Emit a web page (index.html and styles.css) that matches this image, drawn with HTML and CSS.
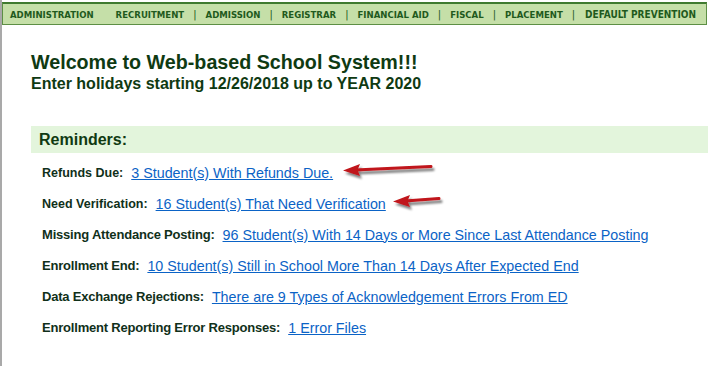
FILE: index.html
```html
<!DOCTYPE html>
<html lang="en">
<head>
  <meta charset="UTF-8">
  <title>Web-based School System</title>
  <link rel="stylesheet" href="styles.css">
</head>
<body>
  <div class="nav">
    <span class="nav-item first">ADMINISTRATION</span>
    <span class="nav-item">RECRUITMENT</span>
    <span class="sep">|</span>
    <span class="nav-item">ADMISSION</span>
    <span class="sep">|</span>
    <span class="nav-item">REGISTRAR</span>
    <span class="sep">|</span>
    <span class="nav-item">FINANCIAL AID</span>
    <span class="sep">|</span>
    <span class="nav-item">FISCAL</span>
    <span class="sep">|</span>
    <span class="nav-item">PLACEMENT</span>
    <span class="sep">|</span>
    <span class="nav-item last">DEFAULT PREVENTION</span>
  </div>

  <div class="main">
    <h1>Welcome to Web-based School System!!!</h1>
    <h2>Enter holidays starting 12/26/2018 up to YEAR 2020</h2>

    <div class="reminders">Reminders:</div>

    <div class="row top first-row">
      <span class="label">Refunds Due:</span>
      <a href="#">3 Student(s) With Refunds Due.</a>
      <svg class="arrow" width="90" height="18" viewBox="0 0 90 18">
        <defs>
          <filter id="shadow" x="-10%" y="-60%" width="130%" height="260%">
            <feGaussianBlur in="SourceAlpha" stdDeviation="1.3"/>
            <feOffset dx="2" dy="3"/>
            <feComponentTransfer><feFuncA type="linear" slope="0.5"/></feComponentTransfer>
            <feMerge><feMergeNode/><feMergeNode in="SourceGraphic"/></feMerge>
          </filter>
        </defs>
        <g filter="url(#shadow)">
          <line x1="12" y1="9" x2="88" y2="5.5" stroke="#c0141a" stroke-width="3" stroke-linecap="round"/>
          <polygon points="0,9.5 17,3 14.5,9 17,15" fill="#c0141a"/>
        </g>
      </svg>
    </div>

    <div class="row top">
      <span class="label">Need Verification:</span>
      <a href="#">16 Student(s) That Need Verification</a>
      <svg class="arrow short" width="48" height="18" viewBox="0 0 48 18">
        <g filter="url(#shadow)">
          <line x1="12" y1="9" x2="46" y2="6.5" stroke="#c0141a" stroke-width="3" stroke-linecap="round"/>
          <polygon points="0,9.5 17,3 14.5,9 17,15" fill="#c0141a"/>
        </g>
      </svg>
    </div>

    <div class="row narrow">
      <span class="label">Missing Attendance Posting:</span>
      <a href="#">96 Student(s) With 14 Days or More Since Last Attendance Posting</a>
    </div>

    <div class="row narrow">
      <span class="label">Enrollment End:</span>
      <a href="#">10 Student(s) Still in School More Than 14 Days After Expected End</a>
    </div>

    <div class="row narrow">
      <span class="label">Data Exchange Rejections:</span>
      <a href="#">There are 9 Types of Acknowledgement Errors From ED</a>
    </div>

    <div class="row narrow">
      <span class="label">Enrollment Reporting Error Responses:</span>
      <a href="#">1 Error Files</a>
    </div>
  </div>
</body>
</html>
```

FILE: styles.css
```css
* {
  box-sizing: border-box;
  margin: 0;
  padding: 0;
}

body {
  background: #ffffff;
  border-left: 2px solid #a9a9a9;
  min-height: 100vh;
  overflow: hidden;
  font-family: 'Liberation Sans', Arial, sans-serif;
  color: #10301a;
}

.nav {
  margin-top: 2px;
  margin-right: 1px;
  height: 23px;
  display: flex;
  align-items: center;
  background: #c5dfa8;
  border-top: 2px solid #3f7a2f;
  border-bottom: 1px solid #5d8f45;
  border-left: 1px solid #5d8f45;
  border-right: 1px solid #5d8f45;
  font-family: 'DejaVu Sans Condensed', 'DejaVu Sans', sans-serif;
  font-size: 9.5px;
  font-weight: bold;
  color: #1f5a1d;
  white-space: nowrap;
}

.nav-item {
  padding: 0 9px;
}

.nav-item.first {
  padding-left: 7px;
  padding-right: 13px;
}

.nav-item.last {
  padding-left: 10px;
  font-size: 10px;
}

.sep {
  font-weight: normal;
  font-size: 11px;
  color: #1f5a1d;
}

.main {
  padding-left: 29px;
}

h1 {
  margin-top: 26px;
  font-size: 19.7px;
  font-weight: bold;
  color: #0f3a12;
  line-height: 23px;
}

h2 {
  font-size: 16px;
  font-weight: bold;
  color: #0f3a12;
  line-height: 19px;
}

.reminders {
  margin-top: 33px;
  height: 27px;
  line-height: 27px;
  padding-left: 8px;
  background: #e3f5dc;
  font-size: 16px;
  font-weight: bold;
  color: #0f3a12;
}

.row {
  height: 31px;
  display: flex;
  align-items: center;
  padding-left: 11px;
  font-size: 13px;
  white-space: nowrap;
}

.first-row {
  margin-top: 4px;
}

.label {
  font-weight: bold;
  color: #10301a;
  margin-right: 8px;
}

.row a {
  color: #0b63c6;
  text-decoration: underline;
}

.top .label {
  font-size: 12.5px;
}

.top a {
  font-size: 14.3px;
}

.narrow .label {
  letter-spacing: -0.2px;
}

.narrow a {
  font-size: 14.3px;
}

.arrow {
  margin-left: 10px;
  margin-top: -5px;
  overflow: visible;
}

.arrow.short {
  margin-left: 7px;
}
```
